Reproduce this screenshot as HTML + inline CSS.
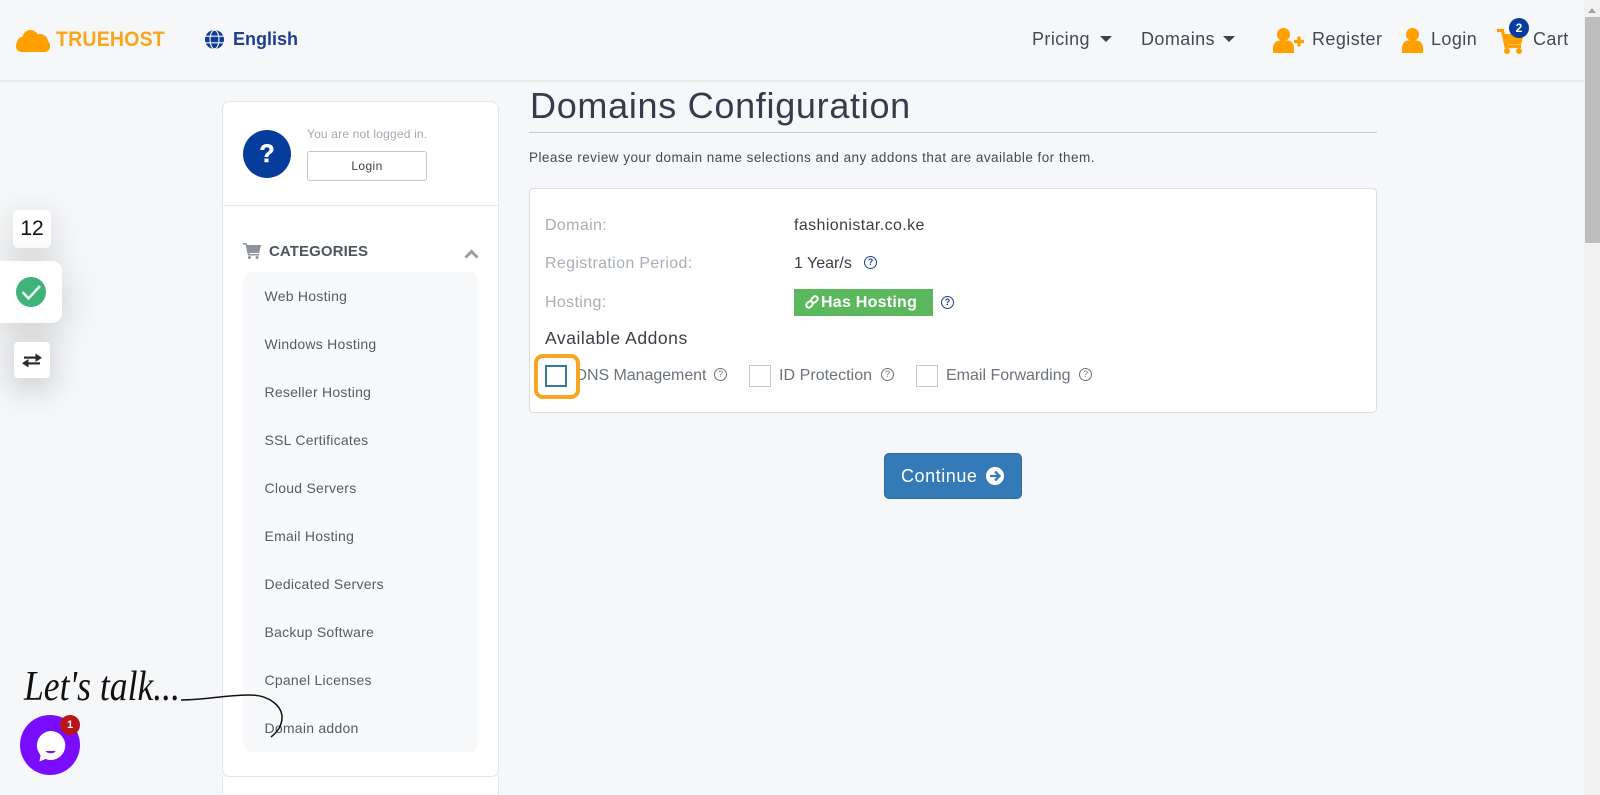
<!DOCTYPE html>
<html lang="en">
<head>
<meta charset="utf-8">
<title>Domains Configuration</title>
<style>
html,body{margin:0;padding:0;width:1600px;height:795px;overflow:hidden;background:#f6f7f9;font-family:"Liberation Sans",sans-serif;color:#3b4350}
*{box-sizing:border-box}
.a{position:absolute;white-space:nowrap;line-height:1}
svg{position:absolute;overflow:visible}
header{position:absolute;left:0;top:0;width:1584px;height:80px;background:#f6f7f9;box-shadow:0 1px 3px rgba(0,0,0,.1)}
.nav{font-size:18px;letter-spacing:.42px;color:#434a57;top:30px}
.card{position:absolute;background:#fff;border:1px solid #e3e5e9;border-radius:6px}
.cat{font-size:14px;letter-spacing:.25px;left:264.500px;color:#555c66}
.lab{font-size:16px;letter-spacing:.35px;left:545px;color:#a9afb6}
.val{font-size:16px;letter-spacing:.4px;left:794px;color:#3a3f47}
.cb{position:absolute;width:22px;height:22px;background:#fff;border:1px solid #c4c7cb;top:365px}
.add{font-size:16px;letter-spacing:.05px;top:368px;color:#6c727a}
.q{position:absolute;width:13px;height:13px;border:1.2px solid #6c727a;border-radius:50%;font-size:9px;line-height:11px;text-align:center;color:#6c727a}
.q.b{border-color:#1c3f8f;color:#1c3f8f;font-weight:bold}
</style>
</head>
<body>
<header>
  <svg style="left:16px;top:30px" width="34" height="22" viewBox="0 0 34 22"><g fill="#ffa000"><rect x="0" y="10" width="34" height="12" rx="5.500"/><circle cx="7.500" cy="13" r="6.500"/><circle cx="14.500" cy="8" r="8"/><circle cx="24" cy="12" r="8"/></g></svg>
  <div class="a" style="left:56px;top:29px;font-size:21px;font-weight:bold;color:#faa61a;letter-spacing:.2px;transform-origin:left;transform:scaleX(.93)">TRUEHOST</div>
  <svg style="left:205px;top:30px" width="19" height="19" viewBox="0 0 19 19"><circle cx="9.500" cy="9.500" r="9.500" fill="#0f3d92"/><g fill="none" stroke="#f6f7f9" stroke-width="1.100"><ellipse cx="9.500" cy="9.500" rx="4.500" ry="9.300"/><path d="M.5 6.200h18M.5 12.800h18"/></g></svg>
  <div class="a" style="left:233px;top:30px;font-size:18px;color:#1c3f8f;font-weight:bold;letter-spacing:0">English</div>

  <div class="a nav" style="left:1032px">Pricing</div>
  <svg style="left:1100px;top:36px" width="12" height="6"><path d="M0 0h12L6 6z" fill="#3b4350"/></svg>
  <div class="a nav" style="left:1141px">Domains</div>
  <svg style="left:1223px;top:36px" width="12" height="6"><path d="M0 0h12L6 6z" fill="#3b4350"/></svg>

  <svg style="left:1273px;top:28px" width="31" height="25" viewBox="0 0 31 25"><circle cx="10.500" cy="6.500" r="6.500" fill="#ffa000"/><path fill="#ffa000" d="M0 25v-5c0-4.500 3-7.500 6.500-7.500h8c3.500 0 6.500 3 6.500 7.500v5z"/><path d="M21 13.500h10M26 8.500v10" stroke="#ffa000" stroke-width="3.200"/></svg>
  <div class="a nav" style="left:1312px">Register</div>

  <svg style="left:1402px;top:28px" width="21" height="25" viewBox="0 0 21 25"><circle cx="10.500" cy="6.500" r="6.500" fill="#ffa000"/><path fill="#ffa000" d="M0 25v-5c0-4.500 3-7.500 6.500-7.500h8c3.500 0 6.500 3 6.500 7.500v5z"/></svg>
  <div class="a nav" style="left:1431px">Login</div>

  <svg style="left:1497px;top:28px" width="27" height="26" viewBox="0 0 27 26"><path fill="none" stroke="#ffa000" stroke-width="3.200" d="M0 2.500h5.500l3.500 16h15"/><path fill="#ffa000" d="M6 6h21l-3 10.500H8z"/><circle cx="10" cy="23" r="3" fill="#ffa000"/><circle cx="22" cy="23" r="3" fill="#ffa000"/></svg>
  <div class="a" style="left:1509px;top:17.500px;width:20px;height:20px;border-radius:50%;background:#063c9c;color:#fff;font-size:12px;line-height:20px;text-align:center;font-weight:bold">2</div>
  <div class="a nav" style="left:1533px">Cart</div>
</header>

<!-- scrollbar -->
<div style="position:absolute;left:1584px;top:0;width:16px;height:795px;background:#f1f1f1"></div>
<svg style="left:1584px;top:6px" width="16" height="8"><path d="M4 7h8L8 2z" fill="#a3a3a3"/></svg>
<div style="position:absolute;left:1585px;top:17px;width:15px;height:226px;background:#bdbdbd"></div>

<!-- sidebar -->
<div class="card" style="left:222px;top:101px;width:277px;height:676px;border-radius:8px"></div>
<div class="card" style="left:222px;top:777px;width:277px;height:18px;border-radius:0;border-width:0 1px;border-color:#e3e5e9"></div>
<div style="position:absolute;left:223px;top:205px;width:275px;height:1px;background:#e4e6ea"></div>
<div class="a" style="left:243px;top:130px;width:48px;height:48px;border-radius:50%;background:#063c9c;color:#fff;font-size:25px;font-weight:bold;line-height:48px;text-align:center;-webkit-text-stroke:.5px #fff">?</div>
<div class="a" style="left:307px;top:128px;font-size:12px;letter-spacing:.18px;color:#a3a8af">You are not logged in.</div>
<div class="a" style="left:307px;top:151px;width:120px;height:30px;border:1px solid #c6c8cc;border-radius:3px;background:#fff;font-size:12px;letter-spacing:.4px;line-height:28px;text-align:center;color:#3d434c">Login</div>

<svg style="left:243px;top:243px" width="18" height="16" viewBox="0 0 18 16"><path fill="#8e939f" d="M0 0h3.500l.6 2H18l-2 7.500H6l.4 1.500H16v1.500H5L2.500 1.500H0z"/><path fill="#8e939f" d="M3.500 2H18l-2 8H5z"/><circle cx="6.500" cy="14.500" r="1.500" fill="#8e939f"/><circle cx="14" cy="14.500" r="1.500" fill="#8e939f"/></svg>
<div class="a" style="left:269px;top:244px;font-size:15px;font-weight:bold;letter-spacing:.1px;color:#4d5460">CATEGORIES</div>
<svg style="left:464px;top:249px" width="15" height="10"><path d="M1.500 8.500L7.500 2.500l6 6" fill="none" stroke="#9a9ea5" stroke-width="3"/></svg>

<div style="position:absolute;left:243px;top:272px;width:235px;height:480px;background:#f8f9fa;border-radius:8px"></div>
<div class="a cat" style="top:289px">Web Hosting</div>
<div class="a cat" style="top:337px">Windows Hosting</div>
<div class="a cat" style="top:385px">Reseller Hosting</div>
<div class="a cat" style="top:433px">SSL Certificates</div>
<div class="a cat" style="top:481px">Cloud Servers</div>
<div class="a cat" style="top:529px">Email Hosting</div>
<div class="a cat" style="top:577px">Dedicated Servers</div>
<div class="a cat" style="top:625px">Backup Software</div>
<div class="a cat" style="top:673px">Cpanel Licenses</div>
<div class="a cat" style="top:721px">Domain addon</div>

<!-- main -->
<div class="a" style="left:530px;top:88px;font-size:36px;letter-spacing:.7px;color:#353c4b">Domains Configuration</div>
<div style="position:absolute;left:529px;top:132px;width:848px;height:1px;background:#c8cacf"></div>
<div class="a" style="left:529px;top:151px;font-size:13.500px;letter-spacing:.46px;color:#444a53">Please review your domain name selections and any addons that are available for them.</div>

<div class="card" style="left:529px;top:188px;width:848px;height:225px;border-radius:4px;border-color:#dcdee2"></div>
<div class="a lab" style="top:218px">Domain:</div>
<div class="a val" style="top:218px">fashionistar.co.ke</div>
<div class="a lab" style="top:255.500px">Registration Period:</div>
<div class="a val" style="top:255.500px;letter-spacing:0">1 Year/s</div>
<div class="q b" style="left:864px;top:256px">?</div>
<div class="a lab" style="top:294.500px">Hosting:</div>
<div style="position:absolute;left:794px;top:289px;width:139px;height:27px;background:#5cb85c"></div>
<svg style="left:805px;top:295px" width="14" height="14" viewBox="0 0 14 14"><g fill="none" stroke="#fff" stroke-width="2"><rect x="1" y="7" width="7" height="5" rx="2.500" transform="rotate(-45 4.500 9.500)"/><rect x="6" y="2" width="7" height="5" rx="2.500" transform="rotate(-45 9.500 4.500)"/></g></svg>
<div class="a" style="left:821px;top:294.500px;font-size:16px;font-weight:bold;color:#fff;letter-spacing:.25px">Has Hosting</div>
<div class="q b" style="left:941px;top:296px">?</div>
<div class="a" style="left:545px;top:330px;font-size:17.500px;letter-spacing:.55px;color:#3a3f47">Available Addons</div>

<div class="a add" style="left:575.500px;letter-spacing:-.05px">DNS Management</div>
<div class="q" style="left:714px;top:368px">?</div>
<div class="a add" style="left:779px">ID Protection</div>
<div class="q" style="left:881px;top:368px">?</div>
<div class="a add" style="left:946px;letter-spacing:0">Email Forwarding</div>
<div class="q" style="left:1079px;top:368px">?</div>
<div class="cb" style="left:749px"></div>
<div class="cb" style="left:916px"></div>
<div class="cb" style="left:545px;border:2px solid #3a7a9c"></div>
<div style="position:absolute;left:533.500px;top:354px;width:46px;height:45px;border:4px solid #f5a623;border-radius:9px"></div>

<div style="position:absolute;left:884px;top:453px;width:138px;height:46px;background:#337ab7;border:1px solid #2e6da4;border-radius:5px"></div>
<div class="a" style="left:901px;top:467px;font-size:18px;letter-spacing:.55px;color:#fff">Continue</div>
<svg style="left:986px;top:467px" width="18" height="18" viewBox="0 0 18 18"><circle cx="9" cy="9" r="9" fill="#fff"/><path d="M4 9h9M9 4.500L13.500 9 9 13.500" fill="none" stroke="#337ab7" stroke-width="2.300"/></svg>

<!-- left widgets -->
<div class="a" style="left:13px;top:210px;width:38px;height:38px;background:#fff;border-radius:5px;box-shadow:0 8px 34px rgba(0,0,0,.16);font-size:21px;line-height:38px;text-align:center;color:#111">12</div>
<div style="position:absolute;left:0;top:261px;width:62px;height:62px;background:#fff;border-radius:0 10px 10px 0;box-shadow:0 10px 40px rgba(0,0,0,.18)"></div>
<svg style="left:16px;top:277px" width="30" height="30" viewBox="0 0 30 30"><circle cx="15" cy="15" r="15" fill="#3db37a"/><path d="M6.500 15l6 6.500L24 9" fill="none" stroke="#e8f6ee" stroke-width="2.600"/></svg>
<div style="position:absolute;left:14px;top:342px;width:36px;height:36px;background:#fff;border-radius:4px;box-shadow:0 8px 34px rgba(0,0,0,.24)"></div>
<svg style="left:22px;top:353px" width="20" height="15" viewBox="0 0 20 15"><g fill="#2a2a2a"><path d="M2 3.500h12v2.200H2z"/><path d="M13.500 .5l6.500 4.200-6.500 4.300z"/><path d="M6 9.300h12v2.200H6z"/><path d="M6.500 6L0 10.200l6.500 4.300z"/></g></svg>

<!-- chat -->
<div style="position:absolute;left:20px;top:715px;width:60px;height:60px;border-radius:50%;background:#7a0cff"></div>
<svg style="left:36px;top:731px" width="29" height="31" viewBox="0 0 29 31"><path fill="#fff" d="M14.500 0a14.500 14.500 0 1 1-5 28l-6 2.500 1-6.500A14.500 14.500 0 0 1 14.500 0z"/><path fill="#7a0cff" d="M9.500 20h10c-1 3-8 3-10 0z"/></svg>
<div class="a" style="left:60px;top:715px;width:20px;height:20px;border-radius:50%;background:#b9151b;color:#fff;font-size:11px;font-weight:bold;line-height:20px;text-align:center">1</div>

<svg style="left:0;top:650px" width="300" height="100" viewBox="0 0 300 100">
  <text x="24" y="50" font-family="'Liberation Serif',serif" font-style="italic" font-size="42" fill="#111" textLength="156" lengthAdjust="spacingAndGlyphs">Let's talk...</text>
  <path d="M181 50C205 50 225 45 250 45c20 0 33 12 32 24-1 9-6 14-11 18" fill="none" stroke="#111" stroke-width="1.500"/>
</svg>
</body>
</html>
